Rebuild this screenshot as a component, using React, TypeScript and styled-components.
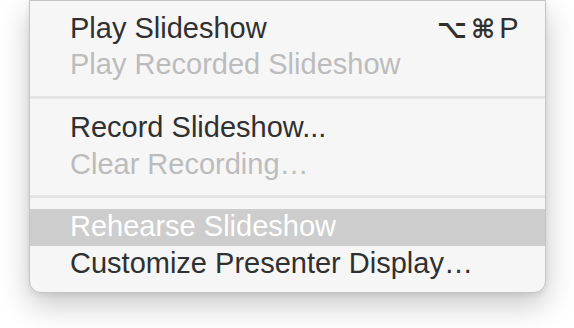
import styled, { createGlobalStyle } from 'styled-components';

const GlobalStyle = createGlobalStyle`
  html, body {
    margin: 0;
    padding: 0;
    background: #ffffff;
    width: 574px;
    height: 328px;
    overflow: hidden;
  }
`;

type Item =
  | { kind: 'item'; label: string; shortcut?: string[]; disabled?: boolean; active?: boolean }
  | { kind: 'sep' };

const items: Item[] = [
  { kind: 'item', label: 'Play Slideshow', shortcut: ['⌥', '⌘', 'P'] },
  { kind: 'item', label: 'Play Recorded Slideshow', disabled: true },
  { kind: 'sep' },
  { kind: 'item', label: 'Record Slideshow...' },
  { kind: 'item', label: 'Clear Recording…', disabled: true },
  { kind: 'sep' },
  { kind: 'item', label: 'Rehearse Slideshow', active: true },
  { kind: 'item', label: 'Customize Presenter Display…' },
];

export default function App() {
  return (
    <>
      <GlobalStyle />
      <Stage>
        <Menu>
          {items.map((it, i) =>
            it.kind === 'sep' ? (
              <Separator key={i} />
            ) : (
              <Row key={i} $disabled={it.disabled} $active={it.active}>
                <Label>{it.label}</Label>
                {it.shortcut && (
                  <Shortcut>
                    {it.shortcut.map((k, j) => (
                      <Key key={j} $symbol={k !== 'P'}>
                        {k}
                      </Key>
                    ))}
                  </Shortcut>
                )}
              </Row>
            )
          )}
        </Menu>
      </Stage>
    </>
  );
}

const Stage = styled.div`
  display: flex;
  padding-left: 28.5px;
`;

const Menu = styled.div`
  box-sizing: border-box;
  width: 517px;
  display: flex;
  flex-direction: column;
  padding: 9.5px 0 9px;
  background: #f6f6f6;
  border: 1px solid #c4c4c4;
  border-radius: 0 0 12px 12px;
  box-shadow: 0 12px 30px rgba(0, 0, 0, 0.22), 0 2px 6px rgba(0, 0, 0, 0.08);
  font-family: 'Liberation Sans', Arial, sans-serif;
  font-size: 29px;
`;

const Row = styled.div<{ $disabled?: boolean; $active?: boolean }>`
  box-sizing: border-box;
  height: 36.8px;
  line-height: 34px;
  padding: 0 26px 2.8px 40.5px;
  display: flex;
  justify-content: space-between;
  align-items: flex-start;
  white-space: nowrap;
  color: ${(p) => (p.$active ? '#ffffff' : p.$disabled ? '#bcbcbc' : '#303030')};
  background: ${(p) => (p.$active ? '#cdcdcd' : 'transparent')};
`;

const Label = styled.span``;

const Shortcut = styled.span`
  display: flex;
  align-items: baseline;
  gap: 4px;
`;

const Key = styled.span<{ $symbol?: boolean }>`
  font-family: ${(p) => (p.$symbol ? "'DejaVu Sans', sans-serif" : "'Liberation Sans', Arial, sans-serif")};
  font-size: ${(p) => (p.$symbol ? '26px' : '29px')};
  font-weight: ${(p) => (p.$symbol ? 700 : 400)};
`;

const Separator = styled.div`
  height: 25.8px;
  display: flex;
  flex-direction: column;
  &::before {
    content: '';
    margin-top: 11.5px;
    height: 3px;
    background: #e4e4e4;
  }
`;
